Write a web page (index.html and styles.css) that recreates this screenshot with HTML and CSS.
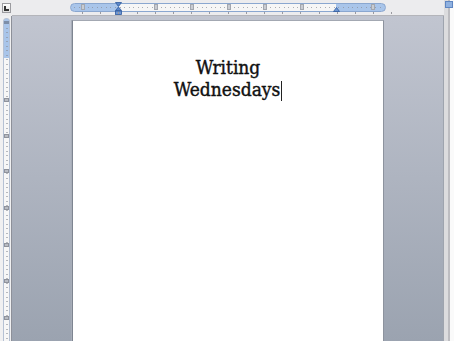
FILE: index.html
```html
<!DOCTYPE html>
<html>
<head>
<meta charset="utf-8">
<link rel="stylesheet" href="styles.css">
</head>
<body>
<div class="app">
  <div class="corner">
    <div class="tab-btn">
      <svg width="7" height="7" viewBox="0 0 7 7"><path d="M1 1h2v3h3v2H1z" fill="#333"/></svg>
    </div>
  </div>
  <div class="hruler">
    <div class="hpill">
      <span class="hnum n-1">1</span>
      <span class="hnum n1">1</span>
      <span class="hnum n2">2</span>
      <span class="hnum n3">3</span>
      <span class="hnum n4">4</span>
      <span class="hnum n5">5</span>
      <span class="hnum n7">7</span>
      <svg class="indent" width="7" height="13" viewBox="0 0 7 13"><path d="M0.5 0.5h6L3.5 4.5z M3.5 5L6.5 8.5H0.5z" fill="#5b86c8" stroke="#2f5a9e" stroke-width="0.8"/><rect x="0.5" y="9" width="6" height="3.5" fill="#6f97d3" stroke="#2f5a9e" stroke-width="0.8"/></svg>
      <svg class="rindent" width="7" height="5" viewBox="0 0 7 5"><path d="M3.5 0.5L6.5 4.5H0.5z" fill="#6f97d3" stroke="#2f5a9e" stroke-width="0.8"/></svg>
    </div>
    <div class="hticks"></div>
  </div>
  <div class="vscroll">
    <div class="split-btn"></div>
  </div>
  <div class="vruler">
    <div class="vpill">
      <span class="vnum" style="top:79px">1</span>
      <span class="vnum" style="top:115px">2</span>
      <span class="vnum" style="top:150px">3</span>
      <span class="vnum" style="top:187px">4</span>
      <span class="vnum" style="top:224px">5</span>
      <span class="vnum" style="top:260px">6</span>
      <span class="vnum" style="top:297px">7</span>
    </div>
  </div>
  <div class="canvas">
    <div class="page">
      <p class="title">Writing<br>Wednesdays<span class="caret"></span></p>
    </div>
  </div>
</div>
</body>
</html>
```
FILE: styles.css
```css
* { box-sizing: border-box; }
html, body { margin: 0; padding: 0; width: 454px; height: 341px; overflow: hidden; }
body { font-family: "Liberation Sans", sans-serif; background: #eaeaec; }

.app {
  display: grid;
  grid-template-columns: 12px 432px 10px;
  grid-template-rows: 16px 325px;
  width: 454px;
  height: 341px;
}

.corner {
  grid-row: 1; grid-column: 1;
  background: #ececee;
  padding: 3px 0 0 2px;
}
.tab-btn {
  width: 9px; height: 10px;
  border: 1px solid #9c9ca0;
  background: linear-gradient(#ffffff, #dedede);
  display: flex; align-items: center; justify-content: center;
}

.hruler {
  grid-row: 1; grid-column: 2;
  background: #ececee;
  border-bottom: 1px solid #b4b5ba;
  position: relative;
}
.hpill {
  position: absolute;
  left: 58px; top: 3px;
  width: 316px; height: 9px;
  border: 1px solid #8aa7d0;
  border-radius: 5px;
  background:
    linear-gradient(to right, #a9c5ea 0, #a9c5ea 47px, #f6f6f6 47px, #f6f6f6 265px, #a9c5ea 265px, #a9c5ea 100%);
}
.hpill::before {
  content: "";
  position: absolute;
  left: 3px; right: 3px; top: 3px; height: 1px;
  background: repeating-linear-gradient(to right, #8b8f98 0, #8b8f98 1px, transparent 1px, transparent 4.56px);
  opacity: .7;
}
.hnum {
  position: absolute;
  top: 0;
  width: 4px; height: 6px;
  background: #c9ccd2;
  border: 1px solid #a3a7af;
  font-size: 4px; line-height: 4px; color: transparent;
  text-align: center;
  overflow: hidden;
}
.n-1 { left: 10px; }
.n1 { left: 83px; }
.n2 { left: 119px; }
.n3 { left: 156px; }
.n4 { left: 192px; }
.n5 { left: 229px; }
.n7 { left: 300px; }
.indent { position: absolute; left: 44px; top: -2px; }
.rindent { position: absolute; left: 262px; top: 3px; }
.hticks {
  position: absolute;
  left: 70px; top: 12px;
  width: 316px; height: 2px;
  background: repeating-linear-gradient(to right, #9a9aa0 0, #9a9aa0 1px, transparent 1px, transparent 18.2px);
}

.vscroll {
  grid-row: 1 / 3; grid-column: 3;
  background: linear-gradient(to right, #dcdcde 0, #dcdcde 4px, #bdbdc1 4px, #bdbdc1 6px, #fafafa 6px);
  padding: 1px 0 0 1px;
}
.split-btn {
  width: 8px; height: 7px;
  background: #8fb1e0;
  border: 1px solid #5f86c2;
}

.vruler {
  grid-row: 2; grid-column: 1;
  background: #f0f0f1;
  border-right: 1px solid #8d9099;
  position: relative;
}
.vpill {
  position: absolute;
  left: 3px; top: 2px;
  width: 7px; height: 340px;
  border: 1px solid #b5c1d4;
  border-radius: 3px;
  background: linear-gradient(#a9c5ea 0, #a9c5ea 39px, #f7f7f7 39px);
}
.vpill::before {
  content: "";
  position: absolute;
  left: 2px; width: 2px; top: 4px; bottom: 0;
  background: repeating-linear-gradient(#8b8f98 0, #8b8f98 1px, transparent 1px, transparent 4.56px);
  opacity: .6;
}
.vpill::after {
  content: "";
  position: absolute;
  left: 0; width: 5px; top: 2px; height: 3px;
  background: #7d8ea8;
}
.vnum {
  position: absolute;
  left: 0;
  width: 5px; height: 4px;
  background: #b9bcc3;
  border: 1px solid #8f939c;
  font-size: 3px; line-height: 3px; color: transparent;
}

.canvas {
  grid-row: 2; grid-column: 2;
  background: linear-gradient(#c1c5d0, #9ba3b0);
  border-right: 1px solid #9ea4ae;
  padding: 4px 0 0 60px;
  overflow: hidden;
}
.page {
  width: 312px;
  height: 340px;
  background: #ffffff;
  border-left: 1px solid #7e8591;
  border-top: 1px solid #a3a8b2;
  border-right: 1px solid #8d939e;
  box-shadow: -1px 0 0 #a7adb8;
  padding-top: 35px;
}
.title {
  margin: 0;
  text-align: center;
  font-family: "DejaVu Serif Condensed", "DejaVu Serif", serif;
  font-stretch: condensed;
  font-size: 19px;
  line-height: 22px;
  color: #111;
  -webkit-text-stroke: 0.4px #111;
}
.caret {
  display: inline-block;
  width: 1px; height: 20px;
  background: #222;
  vertical-align: -5px;
  margin-left: 1px;
}
```
